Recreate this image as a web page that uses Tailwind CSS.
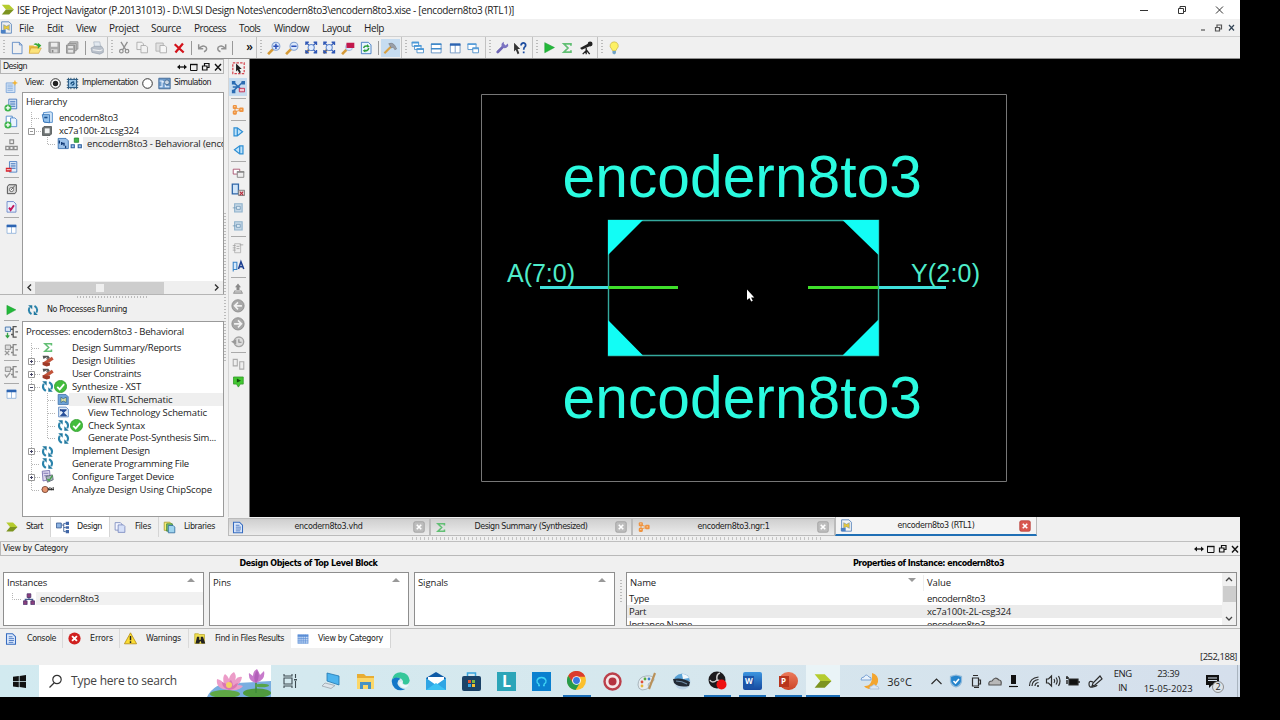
<!DOCTYPE html>
<html lang="en">
<head>
  <meta charset="UTF-8" />
  <meta name="viewport" content="width=device-width, initial-scale=1.0"/>
  <title>ISE Project Navigator</title>
  <script src="https://cdn.jsdelivr.net/npm/@tailwindcss/browser@4"></script>
</head>
<body class="bg-black w-[1280px] h-[720px] overflow-hidden">

  <!-- Icons -->
  <svg class="hidden">
    <defs>
      <linearGradient id="gEdge" x1="0" y1="0" x2="1" y2="1"><stop offset="0" stop-color="#1b9de2"/><stop offset="1" stop-color="#0c59a4"/></linearGradient>
      <linearGradient id="gDoc" x1="0" y1="0" x2="1" y2="1"><stop offset="0" stop-color="#ffffff"/><stop offset="1" stop-color="#b9d4f3"/></linearGradient>
    </defs>
    <symbol id="ise" viewBox="0 0 16 16"><path d="M1 2h9l6 6H6z" fill="#b5cc2e"/><path d="M6 8h10l-6 6H1z" fill="#7d9420"/></symbol>
    <symbol id="schDoc" viewBox="0 0 16 16"><path d="M2 1h9l3 3v11H2z" fill="url(#gDoc)" stroke="#4a7ab8"/><path d="M4.500 4.500l3.500 2 3.500-2v7L8 9.500l-3.500 2z" fill="#e9c83a" stroke="#3b70b0" stroke-width=".5"/><path d="M1 11h6v4H1z" fill="#4b80c5"/></symbol>
    <symbol id="new" viewBox="0 0 16 16"><path d="M2.500 1.500h8l3 3v10h-11z" fill="url(#gDoc)" stroke="#5b88c4"/><path d="M10.500 1.500v3h3" fill="none" stroke="#5b88c4"/></symbol>
    <symbol id="open" viewBox="0 0 16 16"><path d="M1 5h5l1 1h5v8H1z" fill="#e8b93a"/><path d="M3 8h12l-3 6H1z" fill="#fbe27a" stroke="#c8962a" stroke-width=".6"/><path d="M6 4q3-3 5 0V2l4 3-4 4V6q-2-2-5-2z" fill="#35a935"/></symbol>
    <symbol id="save" viewBox="0 0 16 16"><path d="M1.500 1.500h13v13h-12l-1-1z" fill="#a9a9a9" stroke="#8b8b8b"/><path d="M4 2h8v5H4z" fill="#ededed"/><path d="M4 10h8v4H4z" fill="#d9d9d9"/><path d="M5 11h2v3H5z" fill="#888"/></symbol>
    <symbol id="saveall" viewBox="0 0 16 16"><path d="M5 1h10v9H5z" fill="#c9c9c9" stroke="#8b8b8b"/><path d="M3 3h10v9H3z" fill="#c9c9c9" stroke="#8b8b8b"/><path d="M1 5h10v10H1z" fill="#aaa" stroke="#888"/><path d="M3 6h6v3H3zM3 11h6v3H3z" fill="#e6e6e6"/></symbol>
    <symbol id="print" viewBox="0 0 16 16"><path d="M4 1h7l1 6H5z" fill="#e3e9f0" stroke="#a9b4c2" stroke-width=".8"/><path d="M1 8l4-2h8l2 3v4l-4 2-9-2z" fill="#b9c0ca" stroke="#98a2af" stroke-width=".8"/><path d="M3 10l8 1 3-1" stroke="#fff" fill="none"/></symbol>
    <symbol id="cut" viewBox="0 0 16 16"><path d="M4 1l6 10M12 1L6 11" stroke="#8f8f8f" stroke-width="1.6" fill="none"/><circle cx="4.500" cy="12.500" r="2.200" fill="none" stroke="#8f8f8f" stroke-width="1.500"/><circle cx="11.500" cy="12.500" r="2.200" fill="none" stroke="#8f8f8f" stroke-width="1.500"/></symbol>
    <symbol id="copy" viewBox="0 0 16 16"><path d="M1.500 1.500h6l2 2v7h-8z" fill="#f2f2f2" stroke="#a5a5a5"/><path d="M6.500 5.500h6l2 2v7h-8z" fill="#f2f2f2" stroke="#a5a5a5"/></symbol>
    <symbol id="paste" viewBox="0 0 16 16"><path d="M1.500 2.500h9v10h-9z" fill="#e2e2e2" stroke="#acacac"/><path d="M6.500 5.500h6l2 2v7h-8z" fill="#f6f6f6" stroke="#a5a5a5"/></symbol>
    <symbol id="del" viewBox="0 0 16 16"><path d="M2 3l12 11M13 2L3 14" stroke="#d3131b" stroke-width="3"/></symbol>
    <symbol id="undo" viewBox="0 0 16 16"><path d="M2 3v6h6M3 8q5-5 9-1 2 4-3 6" fill="none" stroke="#919191" stroke-width="2"/></symbol>
    <symbol id="redo" viewBox="0 0 16 16"><path d="M14 3v6H8M13 8Q8 3 4 7q-2 4 3 6" fill="none" stroke="#919191" stroke-width="2"/></symbol>
    <symbol id="zin" viewBox="0 0 16 16"><path d="M1 15l6-6" stroke="#d69a37" stroke-width="3"/><circle cx="10" cy="6" r="4.500" fill="#dbe8fb" stroke="#7f9fd0" stroke-width="1.200"/><path d="M10 3v6M7 6h6" stroke="#2b50b8" stroke-width="1.700"/></symbol>
    <symbol id="zout" viewBox="0 0 16 16"><path d="M1 15l6-6" stroke="#d69a37" stroke-width="3"/><circle cx="10" cy="6" r="4.500" fill="#dbe8fb" stroke="#7f9fd0" stroke-width="1.200"/><path d="M7 6h6" stroke="#2b50b8" stroke-width="1.700"/></symbol>
    <symbol id="zfit" viewBox="0 0 16 16"><path d="M1 15l5-5" stroke="#d69a37" stroke-width="3"/><path d="M2 2l12 12M14 2L2 14M1.500 5V1.500H5M11 1.500h3.500V5M14.500 11v3.500H11M5 14.500H1.500V11" stroke="#2f57b5" stroke-width="1.700" fill="none"/><circle cx="8" cy="8" r="3.800" fill="#e1edff" stroke="#5f86cc" stroke-width="1.300"/></symbol>
    <symbol id="zsel" viewBox="0 0 16 16"><path d="M1 15l6-6" stroke="#d69a37" stroke-width="3"/><circle cx="9" cy="7" r="4" fill="#dbe8fb" stroke="#9cb4dc"/><path d="M6 2h9v6H6z" fill="#c2184c"/></symbol>
    <symbol id="refresh" viewBox="0 0 16 16"><path d="M2.500 1.500h8l3 3v10h-11z" fill="#eaf4ff" stroke="#3d77c0"/><path d="M5 8q1-3 5-2M11 8q-1 4-5 3" stroke="#2f9e3d" stroke-width="1.700" fill="none"/><path d="M9 3.500l3 3-3 1zM7 9v4l-3-2z" fill="#2f9e3d"/></symbol>
    <symbol id="hammer" viewBox="0 0 16 16"><path d="M1 14l8-8" stroke="#d9a143" stroke-width="2.500"/><path d="M6 3q4-2 7 2l2 4-2 1-2-3-2 1z" fill="#9a9fa8" stroke="#72767e" stroke-width=".6"/></symbol>
    <symbol id="cascade" viewBox="0 0 16 16"><g fill="#fff" stroke="#3f86c6"><path d="M.5 1.500h8v5h-8zM3.500 5.500h8v5h-8zM6.500 9.500h8v5h-8z"/></g><path d="M0 1h9v2H0zM3 5h9v2H3zM6 9h9v2H6z" fill="#4d9ad8"/></symbol>
    <symbol id="tileh" viewBox="0 0 16 16"><path d="M1.500 2.500h13v12h-13z" fill="#fff" stroke="#3f78b5"/><path d="M1 2h14v2H1zM1 8h14v2H1z" fill="#3f8acb"/></symbol>
    <symbol id="tilev" viewBox="0 0 16 16"><path d="M1.500 2.500h13v12h-13zM8 3v11" fill="#fff" stroke="#5584ba"/><path d="M1 2h14v3H1z" fill="#2c64b2"/></symbol>
    <symbol id="float" viewBox="0 0 16 16"><path d="M1.500 3.500h10v7h-10z" fill="#fff" stroke="#3f86c6"/><path d="M7.500 8.500h7v6h-7z" fill="#fff" stroke="#3f86c6"/><path d="M1 3h11v2H1zM7 8h8v2H7z" fill="#5a9fda"/></symbol>
    <symbol id="wrench" viewBox="0 0 16 16"><path d="M2.500 13.500L10 6" stroke="#6f67b5" stroke-width="3.400" stroke-linecap="round"/><path d="M10 1Q6 3 7.500 7q4 4 8-1l-.5-3-3 2.500-2-2z" fill="#7c74c2"/></symbol>
    <symbol id="whats" viewBox="0 0 16 16"><path d="M1 2l7 7H5l2 5-2 1-2-5-2 2z" fill="#333"/><path d="M9 5q0-3 3-3 3 1 2 4-2 1-2 4M12 12v2" fill="none" stroke="#1c4da0" stroke-width="2"/></symbol>
    <symbol id="play" viewBox="0 0 16 16"><path d="M2.500 2l12 6-12 6.500z" fill="#23b83a" stroke="#159a2b" stroke-width=".6"/></symbol>
    <symbol id="sigma" viewBox="0 0 16 16"><path d="M13 5V2.500H3.500L9 8l-5.500 5.500H13V11" fill="none" stroke="#62bf74" stroke-width="2.300"/></symbol>
    <symbol id="scope" viewBox="0 0 16 16"><path d="M1 8l9-5 2 3-9 4z" fill="#222"/><circle cx="12.500" cy="3.500" r="2.800" fill="#222"/><path d="M8 8v3l-4 4M8 10l4 5M8 10v5" stroke="#222" stroke-width="1.500" fill="none"/></symbol>
    <symbol id="bulb" viewBox="0 0 16 16"><path d="M8 1a4.500 4.500 0 0 0-3 8l1 2h4l1-2a4.500 4.500 0 0 0-3-8z" fill="#fdf164" stroke="#c9b545" stroke-width=".8"/><path d="M6 11.500h4v2.500l-2 1.500-2-1.500z" fill="#6fa3c7"/></symbol>

    <symbol id="newsrc" viewBox="0 0 16 16"><path d="M2.500 3.500h10v11h-10z" fill="#cfe0f5" stroke="#7ea6d8"/><path d="M4 6h6M4 8h6M4 10h6M4 12h6" stroke="#8ab0de"/><path d="M12.500 0l1 2.500L16 3.500l-2.500 1-1 2.500-1-2.500-2.500-1 2.500-1z" fill="#f4b535"/></symbol>
    <symbol id="addsrc" viewBox="0 0 16 16"><path d="M5.500 1.500h9v11h-9z" fill="#e4eefb" stroke="#3f74bb"/><path d="M7 4h6M7 6h6M7 8h6M7 10h6" stroke="#3f74bb"/><circle cx="4.500" cy="11.500" r="4" fill="#3cb44a"/><path d="M4.500 9v5M2 11.500h5" stroke="#fff" stroke-width="1.500"/></symbol>
    <symbol id="addcopy" viewBox="0 0 16 16"><path d="M2.500 1.500h7v10h-7z" fill="#fff" stroke="#4f88c9"/><path d="M7.500 3.500h5l2 2v8h-7z" fill="#e9f3ff" stroke="#4f88c9"/><circle cx="4.500" cy="11.500" r="4" fill="#3cb44a"/><path d="M4.500 9v5M2 11.500h5" stroke="#fff" stroke-width="1.500"/></symbol>
    <symbol id="hier" viewBox="0 0 16 16"><g fill="#ededed" stroke="#8d8d8d" stroke-width="1.500"><path d="M6 2h4.500v4.500H6zM1 10h4v4H1zM11 10h4v4h-4zM6 10h4v4H6z"/></g></symbol>
    <symbol id="rmsrc" viewBox="0 0 16 16"><path d="M5.500 1.500h9v13h-9z" fill="#e4eefb" stroke="#3f74bb"/><path d="M7 4h6M7 6h6M7 8h6M7 10h6" stroke="#3f74bb"/><path d="M1 9h7v5H1z" fill="#d8232d"/><path d="M2 11.500h5" stroke="#fff"/></symbol>
    <symbol id="props" viewBox="0 0 16 16"><path d="M4 2h11v10l-2 3H2V5z" fill="#d8d8d8" stroke="#444" stroke-width="1.300"/><circle cx="8" cy="9" r="3" fill="#fff" stroke="#444"/><path d="M7 10l6-7" stroke="#555" stroke-width="1.400"/></symbol>
    <symbol id="check" viewBox="0 0 16 16"><path d="M2.500 1.500h8l3 3v10h-11z" fill="#eaf1fc" stroke="#5c7cc4"/><path d="M5 9l2 3 4-6" fill="none" stroke="#c2185b" stroke-width="2.400"/></symbol>
    <symbol id="table" viewBox="0 0 16 16"><path d="M1.500 2.500h13v12h-13zM8 3v11" fill="#fff" stroke="#77a2d4"/><path d="M1 2h14v3.500H1z" fill="#2c64b2"/></symbol>
    <symbol id="proc" viewBox="0 0 16 16"><path d="M1.500 2.500h6v5h-6z" fill="#dce9f7" stroke="#3c6ea8"/><path d="M4 9v5M2 12l2 2.500L6 12" stroke="#35a346" stroke-width="1.500" fill="none"/><path d="M14.500 2h-4v12h4M8 5h2.500M8 11h2.500M13 8h3" stroke="#555" stroke-width="1.500" fill="none"/></symbol>
    <symbol id="procx" viewBox="0 0 16 16"><path d="M1.500 2.500h6v5h-6z" fill="#ddd" stroke="#888"/><path d="M1 9l5 5M6 9l-5 5" stroke="#999" stroke-width="1.500"/><path d="M14.500 2h-4v12h4M8 5h2.500M8 11h2.500M13 8h3" stroke="#888" stroke-width="1.500" fill="none"/></symbol>
    <symbol id="procc" viewBox="0 0 16 16"><path d="M1.500 2.500h6v5h-6z" fill="#ddd" stroke="#888"/><path d="M1 11l2 3 4-5" stroke="#999" stroke-width="1.500" fill="none"/><path d="M14.500 2h-4v12h4M8 5h2.500M8 11h2.500M13 8h3" stroke="#888" stroke-width="1.500" fill="none"/></symbol>

    <symbol id="select" viewBox="0 0 16 16"><path d="M1 1.500h14v13H1z" fill="none" stroke="#d4434d" stroke-width="1.500" stroke-dasharray="3 1.500"/><path d="M5 2l7 7H9l2 4-2 1-2-4-2 2z" fill="#222"/></symbol>
    <symbol id="expand" viewBox="0 0 16 16"><path d="M2 2l12 11M14 2L2 13M2 8h8" stroke="#2b6cb3" stroke-width="1.600"/><path d="M1 1h4v4H1zM12 1h4v4h-4zM1 11h4v4H1z" fill="#2b6cb3"/><path d="M9.500 9.500h6v4h-6z" fill="#f5c6d0" stroke="#c0284c"/></symbol>
    <symbol id="nodes" viewBox="0 0 16 16"><path d="M4 5v6M4 5l8 3-8 3" stroke="#eda35c" fill="none" stroke-width="1.500"/><rect x="1" y="1.500" width="5.500" height="5.500" rx="1.500" fill="#ee9340"/><rect x="1" y="9" width="5.500" height="5.500" rx="1.500" fill="#ee9340"/><rect x="9.500" y="5" width="6" height="6" rx="1.500" fill="#ee9340"/><path d="M3 3h1.500v1.500H3zM3 10.500h1.500V12H3zM11.500 7H13v1.500h-1.500z" fill="#fbd6a8"/></symbol>
    <symbol id="bufr" viewBox="0 0 16 16"><path d="M2.500 3v10h4l6.500-5-6.500-5zM6.500 3v10" fill="#bfe3fa" stroke="#2f8fd4" stroke-width="1.500"/></symbol>
    <symbol id="bufl" viewBox="0 0 16 16"><path d="M13.500 3v10h-4L3 8l6.500-5zM9.500 3v10" fill="#bfe3fa" stroke="#2f8fd4" stroke-width="1.500"/></symbol>
    <symbol id="wins" viewBox="0 0 16 16"><path d="M1.500 3.500h8v6h-8z" fill="#fff" stroke="#a04060"/><path d="M6.500 6.500h8v7h-8z" fill="#eee" stroke="#777"/><path d="M6 6h9v2H6z" fill="#888"/></symbol>
    <symbol id="winx" viewBox="0 0 16 16"><path d="M1.500 1.500h7v11h-7z" fill="#cfe4f8" stroke="#2f66a8" stroke-width="1.500"/><path d="M8.500 8.500h7v6h-7z" fill="#ddd" stroke="#777"/><path d="M10 10l4 4M14 10l-4 4" stroke="#b7283a" stroke-width="1.300"/></symbol>
    <symbol id="chipb" viewBox="0 0 16 16"><path d="M3.500 2.500h10v11h-10z" fill="#c5d7e6" stroke="#8fb2cc" stroke-width="1.500"/><path d="M6 6h5v4H6zM1 8h4" fill="#dceaf5" stroke="#6b93b3"/></symbol>
    <symbol id="notes" viewBox="0 0 16 16"><path d="M3.500 2.500h8v12h-8z" fill="#eee" stroke="#aaa"/><path d="M1 5h4M1 8h4M1 11h4M6 6h4M6 9h4M10 4h5" stroke="#999"/></symbol>
    <symbol id="rename" viewBox="0 0 16 16"><path d="M1.500 3v12M1.500 3.500H6v9H2" fill="#d5e9fa" stroke="#3883c8" stroke-width="1.300"/><path d="M8 12l3-9 3.500 9M9 9h4.500" stroke="#1c3f90" stroke-width="1.900" fill="none"/></symbol>
    <symbol id="up" viewBox="0 0 16 16"><path d="M8 1l4 5h-2v4H6V6H4z" fill="#8a8a8a"/><path d="M4 10l-2 4h12l-2-4" fill="#bbb" stroke="#8a8a8a"/></symbol>
    <symbol id="back" viewBox="0 0 16 16"><circle cx="8" cy="8" r="7" fill="#a8a8a8" stroke="#8c8c8c"/><path d="M12.500 8H4.500M8 4L4 8l4 4" stroke="#f2f2f2" stroke-width="1.800" fill="none"/></symbol>
    <symbol id="fwd" viewBox="0 0 16 16"><circle cx="8" cy="8" r="7" fill="#a8a8a8" stroke="#8c8c8c"/><path d="M3.500 8h8M8 4l4 4-4 4" stroke="#f2f2f2" stroke-width="1.800" fill="none"/></symbol>
    <symbol id="clock" viewBox="0 0 16 16"><circle cx="9" cy="8" r="5.500" fill="#ddd" stroke="#a3a3a3" stroke-width="1.600"/><path d="M0 8l6-3v6z" fill="#999"/><path d="M9 5v3.500h3" stroke="#888" stroke-width="1.300" fill="none"/></symbol>
    <symbol id="pair" viewBox="0 0 16 16"><path d="M1.500 2.500h5v8h-5zM9.500 5.500h5v9h-5z" fill="#eee" stroke="#aaa" stroke-width="1.300"/></symbol>
    <symbol id="go" viewBox="0 0 16 16"><path d="M2 1.500h13v9.500h-4L8.500 15 6 11H2z" fill="#43c832" stroke="#2f9624"/><path d="M6.500 3.500L12 6.500 6.500 9z" fill="#134f0f"/></symbol>

    <symbol id="impl" viewBox="0 0 16 16"><path d="M1 3h14M1 6h14M1 10h14M1 13h14M3 1v14M6 1v14M10 1v14M13 1v14" stroke="#2e5673" stroke-width="1.200"/><path d="M3 3h10v10H3z" fill="#9cc7e8" stroke="#1e4f7b"/><path d="M6 9q0-3 4-3M10 7q0 3-3 3" fill="none" stroke="#124a7c" stroke-width="1.400"/></symbol>
    <symbol id="sim" viewBox="0 0 16 16"><path d="M1 1.500h14v13H1z" fill="#6f9ccc" stroke="#385f8d"/><path d="M2 12h3V6h4v6h5M2 5h4" stroke="#e8f2ff" fill="none" stroke-width="1.300"/><circle cx="11" cy="6.500" r="3" fill="#cbd7e4" stroke="#355f8b"/></symbol>
    <symbol id="proj" viewBox="0 0 16 16"><path d="M3 2l9-1 2 1v12H5l-2-1z" fill="#d4e7f9" stroke="#3c7fc4"/><path d="M1.500 4.500h9v10l-7-1z" fill="#93c1ec" stroke="#2d6db2"/><path d="M4 8h4" stroke="#194f8d" stroke-width="2"/></symbol>
    <symbol id="chip" viewBox="0 0 16 16"><path d="M2 4l2-2h10v10l-2 2H2z" fill="#6d7272" stroke="#4a4f4f"/><path d="M5 4.500h6.500V11H5z" fill="#f2f4f4"/></symbol>
    <symbol id="vhd" viewBox="0 0 16 16"><path d="M1.500 1.500h10l3 3v10h-13z" fill="#9cc2ea" stroke="#2c66aa"/><path d="M3 4v4M6 6v4M9 7v4M6 8h3M11 11v3" stroke="#153d78" stroke-width="1.700"/></symbol>
    <symbol id="mods" viewBox="0 0 16 16"><path d="M5.500 1h5.500v5.500H5.500z" fill="#43b64b" stroke="#23852c"/><path d="M1.500 9.500h4v4h-4zM10.500 9.500h4v4h-4z" fill="#a6c9ee" stroke="#2c5f9f" stroke-width="1.400"/></symbol>
    <symbol id="tools" viewBox="0 0 16 16"><path d="M2 2h7l2 3-2 1-2-2-4 2z" fill="#555"/><path d="M7 5l4 5" stroke="#777" stroke-width="2"/><path d="M3 12.500L14.500 5" stroke="#c2533a" stroke-width="4"/><path d="M2 10l9 1v3l-4 1.500-5-2z" fill="#9e3a28"/></symbol>
    <symbol id="cyc" viewBox="0 0 16 16"><path d="M6 13.500Q.5 10 3.500 4.500M10 2.500q5.500 3.500 2.500 9" fill="none" stroke="#2a83ab" stroke-width="2.500"/><path d="M1.500 1.500H7V7zM14.500 14.500H9V9z" fill="#23799f"/></symbol>
    <symbol id="ok" viewBox="0 0 16 16"><circle cx="8" cy="8" r="7.500" fill="#43bd3c" stroke="#2f9e2c"/><path d="M4 8.500l3 3 5.500-6.500" fill="none" stroke="#fff" stroke-width="2.200"/></symbol>
    <symbol id="rtl" viewBox="0 0 16 16"><path d="M1.500 1.500h10l3 3v10h-13z" fill="#6ea3d8" stroke="#3b6ea8"/><path d="M5 5l3 2 4-2v7l-4-2-3 2z" fill="#d9dfa0" stroke="#3c6a87"/></symbol>
    <symbol id="tech" viewBox="0 0 16 16"><path d="M1.500 1.500h10l3 3v10h-13z" fill="#e1ecf9" stroke="#4775b7"/><path d="M4 5h8L8 9zM4 13h8L8 9zM4 4v3" fill="#2351a3" stroke="#173a80"/></symbol>
    <symbol id="config" viewBox="0 0 16 16"><path d="M1.500 1.500l9-1 1 11-9 2z" fill="#ddd6ee" stroke="#6d65a8"/><path d="M3 4h6M4 7h5" stroke="#6d65a8"/><path d="M6 8l8-2 1 6-7 3z" fill="#a9b4c0" stroke="#58616c"/><path d="M8 11l2 2 4-6" stroke="#42a344" fill="none" stroke-width="1.600"/></symbol>
    <symbol id="cscope" viewBox="0 0 16 16"><path d="M1 8h15" stroke="#444" stroke-width="1.500"/><circle cx="5" cy="8" r="3.800" fill="#e5956f" stroke="#6d3a2a"/><path d="M9 9V6M11 9V5M13 9V6M15 9V5" stroke="#333" stroke-width="1.200"/></symbol>
    <symbol id="flow" viewBox="0 0 16 16"><path d="M.5 2.500h6v6h-6z" fill="#8db3e2" stroke="#32568f"/><path d="M7 5h3M9.500 3v10M9.500 8H12M9.500 13H12M9.500 3H12" stroke="#32568f" fill="none"/><path d="M12 1h4v4h-4zM12 6.500h4v3h-4zM12 11h4v4h-4z" fill="#4066a7"/></symbol>
    <symbol id="files" viewBox="0 0 16 16"><path d="M1.500 1.500h7l2 2v8h-9z" fill="#f4f6ff" stroke="#6d7fb8"/><path d="M5.500 4.500h7l2 2v8h-9z" fill="#d6e0f8" stroke="#6d7fb8"/></symbol>
    <symbol id="libs" viewBox="0 0 16 16"><path d="M1.500 1.500h7l2 2v8h-9z" fill="#f8ef78" stroke="#a59c2a"/><path d="M4.500 3.500h7v9h-7z" fill="#7cc676" stroke="#3a7d36"/><path d="M6.500 5.500h6l2 2v7h-8z" fill="#9fd4ee" stroke="#2f6a9c"/></symbol>
    <symbol id="doc" viewBox="0 0 16 16"><path d="M2 1h8l4 4v10H2z" fill="#dbe8fb" stroke="#376cc0" stroke-width="1.400"/><path d="M5 5h5M5 7.500h7M5 10h7M5 12.500h6" stroke="#2a5eb4"/></symbol>
    <symbol id="err" viewBox="0 0 16 16"><circle cx="8" cy="8" r="7.500" fill="#d0201f"/><path d="M5 5l6 6M11 5l-6 6" stroke="#fff" stroke-width="2.300"/></symbol>
    <symbol id="warn" viewBox="0 0 16 16"><path d="M8 1l7.500 13.500H.5z" fill="#fbdc33" stroke="#b58e12"/><path d="M8 5v5M8 11.500v2" stroke="#222" stroke-width="1.800"/></symbol>
    <symbol id="find" viewBox="0 0 16 16"><path d="M1 1h5l1 1h7v12H1z" fill="#f0df4e" stroke="#b8a52c"/><path d="M4 5h3v4h2V5h3l3 9h-5l-1-3H8l-1 3H2z" fill="#222"/></symbol>
    <symbol id="grid" viewBox="0 0 16 16"><path d="M1 2h14v12H1z" fill="#d8e7fa"/><path d="M1 2h14v3H1z" fill="#5c8fd6"/><path d="M1.500 2v12M4 2v12M6.500 2v12M9 2v12M11.500 2v12M14.500 2v12M1 7.500h14M1 10.500h14M1 13.500h14" stroke="#5c8fd6"/></symbol>
    <symbol id="inst" viewBox="0 0 16 16"><path d="M8 4v5M3 12V8.500h10V12" stroke="#445a8c" stroke-width="1.500" fill="none"/><path d="M5.500 1h5v5h-5zM.5 10.500h5v5h-5zM10.500 10.500h5v5h-5z" fill="#8b3f7c" stroke="#49306b"/></symbol>
    <symbol id="xg" viewBox="0 0 16 16"><rect x="1" y="1" width="14" height="14" rx="2" fill="#bdbdbd" stroke="#999"/><path d="M5 5l6 6M11 5l-6 6" stroke="#fff" stroke-width="2.200"/></symbol>
    <symbol id="xr" viewBox="0 0 16 16"><rect x="1" y="1" width="14" height="14" rx="2" fill="#d9584f" stroke="#b53c35"/><path d="M5 5l6 6M11 5l-6 6" stroke="#fff" stroke-width="2.200"/></symbol>
    <symbol id="dock" viewBox="0 0 48 12"><path d="M4 6h6" stroke="#111" stroke-width="1.300"/><path d="M5 3.500L2 6l3 2.500zM9 3.500L12 6 9 8.500z" fill="#111"/><path d="M15.500 3.500h6.500v6h-6.500z" fill="none" stroke="#111"/><path d="M15 2.800h7.500v1.400H15z" fill="#111"/><path d="M29.500 4.500V2.500h4.500v4h-1.500M27.500 5h4.500v4h-4.500z" fill="none" stroke="#111" stroke-width="1.200"/><path d="M40 3l6 6.500M46 3l-6 6.500" stroke="#111" stroke-width="1.400"/></symbol>
  </svg>

  <div class="w-[1240px] h-[697px] bg-[#f0f0f0] flex flex-col overflow-hidden font-['Open_Sans',sans-serif] text-[9.5px] leading-none text-[#222] whitespace-nowrap">

    <!-- Title bar -->
    <div class="h-[19px] shrink-0 bg-white flex items-center text-[10px]">
      <svg class="w-[13px] h-[13px] ml-[1px] mr-[3px]"><use href="#ise"/></svg>
      <span data-w="497">ISE Project Navigator (P.20131013) - D:\VLSI Design Notes\encodern8to3\encodern8to3.xise - [encodern8to3 (RTL1)]</span>
      <svg class="ml-auto mr-[15px] w-[88px] h-[12px]" fill="none" stroke="#333" stroke-width="1"><path d="M3 6.500h8"/><path d="M41.500 4.500h5v5h-5zM43 4V2.500h5.500v5H47"/><path d="M79 2.500l7 7M86 2.500l-7 7"/></svg>
    </div>

    <!-- Menu -->
    <div class="h-[18px] shrink-0 flex items-center border-b border-[#d0d0d0] text-[10px]">
      <svg class="w-[13px] h-[13px] mr-[6px]"><use href="#schDoc"/></svg>
      <div class="w-[28px]"><span data-w="15">File</span></div>
      <div class="w-[29px]"><span data-w="16">Edit</span></div>
      <div class="w-[33px]"><span data-w="20">View</span></div>
      <div class="w-[42px]"><span data-w="30">Project</span></div>
      <div class="w-[43px]"><span data-w="30">Source</span></div>
      <div class="w-[45px]"><span data-w="32">Process</span></div>
      <div class="w-[35px]"><span data-w="21">Tools</span></div>
      <div class="w-[48px]"><span data-w="35">Window</span></div>
      <div class="w-[42px]"><span data-w="29">Layout</span></div>
      <div><span data-w="20">Help</span></div>
      <svg class="ml-auto mr-[2px] w-[38px] h-[12px]" fill="none" stroke="#555" stroke-width="1.200"><path d="M1 8h4"/><path d="M15.500 5.500h4v3.500h-4zM17 5V3h4.500v4H20"/><path d="M29 3l5 5.500M34 3l-5 5.500" stroke="#345"/></svg>
    </div>

    <!-- Toolbar -->
    <div class="h-[22px] shrink-0 flex items-stretch border-b border-[#8f8f8f] text-[#111]">
      <div class="flex items-center w-[108px] pl-[3px] border-r border-[#c2c2c2]">
        <div class="w-[2px] h-[15px] mr-[3px] bg-[repeating-linear-gradient(180deg,#bbb_0_1px,transparent_1px_3px)]"></div>
        <svg class="w-[18.4px] h-[14px]"><use href="#new"/></svg>
        <svg class="w-[18.4px] h-[14px]"><use href="#open"/></svg>
        <svg class="w-[18.4px] h-[13px]"><use href="#save"/></svg>
        <svg class="w-[18.4px] h-[13px]"><use href="#saveall"/></svg>
        <div class="w-px h-[14px] bg-[#999] ml-[3px] mr-[2px]"></div>
        <svg class="w-[18.4px] h-[14px]"><use href="#print"/></svg>
      </div>
      <div class="flex items-center w-[149px] pl-[3px] border-r border-[#c2c2c2]">
        <div class="w-[2px] h-[15px] mr-[2px] bg-[repeating-linear-gradient(180deg,#bbb_0_1px,transparent_1px_3px)]"></div>
        <svg class="w-[18.4px] h-[13px]"><use href="#cut"/></svg>
        <svg class="w-[18.4px] h-[13px]"><use href="#copy"/></svg>
        <svg class="w-[18.4px] h-[13px]"><use href="#paste"/></svg>
        <svg class="w-[18.4px] h-[12px]"><use href="#del"/></svg>
        <div class="w-px h-[14px] bg-[#999] ml-[2px] mr-[2px]"></div>
        <svg class="w-[18.4px] h-[12px]"><use href="#undo"/></svg>
        <svg class="w-[18.4px] h-[12px]"><use href="#redo"/></svg>
        <div class="w-px h-[14px] bg-[#999] ml-[2px]"></div>
        <span class="ml-[13px] mb-[2px] text-[12px] font-semibold">»</span>
      </div>
      <div class="flex items-center w-[145px] pl-[3px] border-r border-[#c2c2c2]">
        <div class="w-[2px] h-[15px] mr-[3px] bg-[repeating-linear-gradient(180deg,#bbb_0_1px,transparent_1px_3px)]"></div>
        <svg class="w-[18.4px] h-[14px]"><use href="#zin"/></svg>
        <svg class="w-[18.4px] h-[14px]"><use href="#zout"/></svg>
        <svg class="w-[18.4px] h-[13px]"><use href="#zfit"/></svg>
        <svg class="w-[18.4px] h-[13px]"><use href="#zfit"/></svg>
        <svg class="w-[18.4px] h-[14px]"><use href="#zsel"/></svg>
        <svg class="w-[18.4px] h-[14px]"><use href="#refresh"/></svg>
        <div class="w-px h-[14px] bg-[#999] ml-[3px] mr-[2px]"></div>
        <div class="w-[19px] h-[18px] bg-[#c6dcf0] flex items-center justify-center"><svg class="w-[15px] h-[14px]"><use href="#hammer"/></svg></div>
      </div>
      <div class="flex items-center w-[84px] pl-[3px] border-r border-[#c2c2c2]">
        <div class="w-[2px] h-[15px] mr-[2px] bg-[repeating-linear-gradient(180deg,#bbb_0_1px,transparent_1px_3px)]"></div>
        <svg class="w-[18.4px] h-[13px]"><use href="#cascade"/></svg>
        <svg class="w-[18.4px] h-[12px]"><use href="#tileh"/></svg>
        <svg class="w-[18.4px] h-[12px]"><use href="#tilev"/></svg>
        <svg class="w-[18.4px] h-[13px]"><use href="#float"/></svg>
      </div>
      <div class="flex items-center w-[47px] pl-[3px] border-r border-[#c2c2c2]">
        <div class="w-[2px] h-[15px] mr-[2px] bg-[repeating-linear-gradient(180deg,#bbb_0_1px,transparent_1px_3px)]"></div>
        <svg class="w-[18.4px] h-[13px]"><use href="#wrench"/></svg>
        <svg class="w-[18.4px] h-[14px]"><use href="#whats"/></svg>
      </div>
      <div class="flex items-center w-[65px] pl-[3px] border-r border-[#c2c2c2]">
        <div class="w-[2px] h-[15px] mr-[2px] bg-[repeating-linear-gradient(180deg,#bbb_0_1px,transparent_1px_3px)]"></div>
        <svg class="w-[18.4px] h-[13px]"><use href="#play"/></svg>
        <svg class="w-[18.4px] h-[12px]"><use href="#sigma"/></svg>
        <svg class="w-[18.4px] h-[14px]"><use href="#scope"/></svg>
      </div>
      <div class="flex items-center pl-[3px]">
        <div class="w-[2px] h-[15px] mr-[2px] bg-[repeating-linear-gradient(180deg,#bbb_0_1px,transparent_1px_3px)]"></div>
        <svg class="w-[18.4px] h-[14px]"><use href="#bulb"/></svg>
      </div>
    </div>

    <!-- Work area -->
    <div class="h-[458px] shrink-0 flex">
      <div class="w-[224px] shrink-0 flex flex-col">
        <div class="h-[15px] shrink-0 flex items-center border border-[#b5b5b5] pl-[2px] font-['DejaVu_Sans',sans-serif] text-[8px]">
          <span data-w="24">Design</span>
          <svg class="ml-auto w-[48px] h-[12px]"><use href="#dock"/></svg>
        </div>
        <div class="h-[221px] shrink-0 flex border-b border-[#b5b5b5]">
          <div class="w-[22px] shrink-0 flex flex-col items-center pt-[4px]">
            <svg class="w-[14px] h-[17.7px]"><use href="#newsrc"/></svg>
            <svg class="w-[14px] h-[17.7px]"><use href="#addsrc"/></svg>
            <svg class="w-[14px] h-[17.7px]"><use href="#addcopy"/></svg>
            <div class="w-[15px] h-[4.5px] flex items-center"><div class="w-full h-px bg-[#aaa]"></div></div>
            <svg class="w-[13px] h-[17.7px]"><use href="#hier"/></svg>
            <div class="w-[15px] h-[4.5px] flex items-center"><div class="w-full h-px bg-[#aaa]"></div></div>
            <svg class="w-[13px] h-[17.7px]"><use href="#rmsrc"/></svg>
            <div class="w-[15px] h-[4.5px] flex items-center"><div class="w-full h-px bg-[#aaa]"></div></div>
            <svg class="w-[11px] h-[17.7px]"><use href="#props"/></svg>
            <svg class="w-[13px] h-[17.7px]"><use href="#check"/></svg>
            <div class="w-[15px] h-[4.5px] flex items-center"><div class="w-full h-px bg-[#aaa]"></div></div>
            <svg class="w-[11px] h-[17.7px]"><use href="#table"/></svg>
          </div>
          <div class="w-[202px] flex flex-col">
            <div class="h-[18px] flex items-center pl-[3px] font-['DejaVu_Sans',sans-serif] text-[8px]">
              <div class="w-[25px]"><span data-w="19">View:</span></div>
              <svg class="w-[11px] h-[11px] mr-[5px]" viewBox="0 0 11 11"><circle cx="5.500" cy="5.500" r="4.800" fill="#fff" stroke="#333"/><circle cx="5.500" cy="5.500" r="2.700" fill="#222"/></svg>
              <svg class="w-[13px] h-[13px] mr-[3px]"><use href="#impl"/></svg>
              <div class="w-[60px]"><span data-w="56">Implementation</span></div>
              <svg class="w-[11px] h-[11px] mr-[5px]" viewBox="0 0 11 11"><circle cx="5.500" cy="5.500" r="4.800" fill="#fff" stroke="#333"/></svg>
              <svg class="w-[13px] h-[13px] mr-[3px]"><use href="#sim"/></svg>
              <span data-w="37">Simulation</span>
            </div>
            <div class="h-[202px] relative flex flex-col bg-white border border-[#9a9a9a] border-b-0 overflow-hidden">
              <svg class="absolute left-0 top-0 w-[50px] h-[70px]" fill="none" stroke="#b5b5b5" stroke-dasharray="1 1"><path d="M8.500 19v20M9 25.500h8M13 38.500h5M24.500 44v7M25 51.500h8"/><path d="M5.500 35.500h6v6h-6zM7 38.500h3" fill="#fff" stroke="#999" stroke-dasharray="none"/></svg>
              <div class="h-[18px] flex items-center pl-[3px]"><span data-w="41">Hierarchy</span></div>
              <div class="h-[13px] flex items-center pl-[18px]"><svg class="w-[13px] h-[13px] mr-[5px]"><use href="#proj"/></svg><span data-w="59">encodern8to3</span></div>
              <div class="h-[13px] flex items-center pl-[18px]"><svg class="w-[12px] h-[12px] mr-[6px]"><use href="#chip"/></svg><span data-w="80">xc7a100t-2Lcsg324</span></div>
              <div class="h-[13px] flex items-center pl-[34px]"><svg class="w-[13px] h-[13px]"><use href="#vhd"/></svg><svg class="w-[13px] h-[13px] mr-[1px]"><use href="#mods"/></svg><div class="bg-[#efefef] h-[13px] w-[140px] flex items-center pl-[4px]"><span data-w="200">encodern8to3 - Behavioral (encodern8to3.vhd)</span></div></div>
              <div class="mt-auto h-[13px] flex items-center bg-[#efefef] px-[3px] justify-between">
                <svg class="w-[7px] h-[9px]" fill="none" stroke="#333" stroke-width="1.400"><path d="M5 1.500L2 4.500l3 3"/></svg>
                <div class="w-[129px] h-[12px] bg-[#cdcdcd] mr-[47px] flex items-center justify-center"><div class="w-[8px] h-[8px] bg-[#efefef]"></div></div>
                <svg class="w-[7px] h-[9px]" fill="none" stroke="#333" stroke-width="1.400"><path d="M2 1.500l3 3-3 3"/></svg>
              </div>
            </div>
          </div>
        </div>
        <div class="h-[4px] shrink-0 flex justify-center items-center"><div class="w-[70px] h-[2px] bg-[repeating-linear-gradient(90deg,#bbb_0_1px,transparent_1px_3px)]"></div></div>
        <div class="h-[218px] flex">
          <div class="w-[22px] shrink-0 flex flex-col items-center pt-[2px]">
            <svg class="w-[12px] h-[17.7px]"><use href="#play"/></svg>
            <div class="w-[15px] h-[4.5px] flex items-center"><div class="w-full h-px bg-[#aaa]"></div></div>
            <svg class="w-[14px] h-[17.7px]"><use href="#proc"/></svg>
            <svg class="w-[14px] h-[17.7px]"><use href="#procx"/></svg>
            <div class="w-[15px] h-[4.5px] flex items-center"><div class="w-full h-px bg-[#aaa]"></div></div>
            <svg class="w-[14px] h-[17.7px]"><use href="#procc"/></svg>
            <div class="w-[15px] h-[4.5px] flex items-center"><div class="w-full h-px bg-[#aaa]"></div></div>
            <svg class="w-[11px] h-[17.7px]"><use href="#table"/></svg>
          </div>
          <div class="w-[202px] flex flex-col">
            <div class="h-[22px] flex items-center pl-[5px] font-['DejaVu_Sans',sans-serif] text-[8px]">
              <svg class="w-[12px] h-[12px] mr-[8px]"><use href="#cyc"/></svg><span data-w="80">No Processes Running</span>
            </div>
            <div class="h-[196px] relative bg-white border border-[#9a9a9a] overflow-hidden">
              <svg class="absolute left-0 top-0 w-[50px] h-[190px]" fill="none" stroke="#b5b5b5">
                <path d="M8.500 21v147M9 26.500h7M12 39.500h5M12 52.500h5M12 65.500h5M24.500 71v46M25 78.500h7M25 91.500h7M25 104.500h7M25 116.500h7M12 129.500h5M9 142.500h7M12 155.500h5M9 168.500h7" stroke-dasharray="1 1"/>
                <path d="M5.500 36.500h6v6h-6zM5.500 49.500h6v6h-6zM5.500 62.500h6v6h-6zM5.500 126.500h6v6h-6zM5.500 152.500h6v6h-6z" fill="#fff" stroke="#999"/>
                <path d="M7 39.500h3M8.500 38v3M7 52.500h3M8.500 51v3M7 65.500h3M7 129.500h3M8.500 128v3M7 155.500h3M8.500 154v3" stroke="#446"/>
              </svg>
              <div class="h-[19.5px] flex items-center pl-[3px]"><span data-w="158">Processes: encodern8to3 - Behavioral</span></div>
              <div class="h-[12.9px] flex items-center pl-[19px]"><svg class="w-[12px] h-[11px] mr-[18px]"><use href="#sigma"/></svg><span data-w="109">Design Summary/Reports</span></div>
              <div class="h-[12.9px] flex items-center pl-[18px]"><svg class="w-[13px] h-[13px] mr-[18px]"><use href="#tools"/></svg><span data-w="63">Design Utilities</span></div>
              <div class="h-[12.9px] flex items-center pl-[18px]"><svg class="w-[13px] h-[13px] mr-[18px]"><use href="#tools"/></svg><span data-w="69">User Constraints</span></div>
              <div class="h-[12.9px] flex items-center pl-[18px]"><svg class="w-[13px] h-[13px]"><use href="#cyc"/></svg><svg class="w-[13px] h-[13px] mr-[5px]"><use href="#ok"/></svg><span data-w="69">Synthesize - XST</span></div>
              <div class="h-[12.9px] flex items-center pl-[34px]"><svg class="w-[13px] h-[13px]"><use href="#rtl"/></svg><div class="w-[160px] h-[13px] bg-[#efefef] flex items-center pl-[18px]"><span data-w="85">View RTL Schematic</span></div></div>
              <div class="h-[12.9px] flex items-center pl-[34px]"><svg class="w-[13px] h-[12px] mr-[18px]"><use href="#tech"/></svg><span data-w="119">View Technology Schematic</span></div>
              <div class="h-[12.9px] flex items-center pl-[34px]"><svg class="w-[13px] h-[13px]"><use href="#cyc"/></svg><svg class="w-[13px] h-[13px] mr-[5px]"><use href="#ok"/></svg><span data-w="57">Check Syntax</span></div>
              <div class="h-[12.9px] flex items-center pl-[34px]"><svg class="w-[13px] h-[13px] mr-[18px]"><use href="#cyc"/></svg><span data-w="128">Generate Post-Synthesis Sim...</span></div>
              <div class="h-[12.9px] flex items-center pl-[18px]"><svg class="w-[13px] h-[13px] mr-[18px]"><use href="#cyc"/></svg><span data-w="78">Implement Design</span></div>
              <div class="h-[12.9px] flex items-center pl-[18px]"><svg class="w-[13px] h-[13px] mr-[18px]"><use href="#cyc"/></svg><span data-w="117">Generate Programming File</span></div>
              <div class="h-[12.9px] flex items-center pl-[18px]"><svg class="w-[13px] h-[13px] mr-[18px]"><use href="#config"/></svg><span data-w="102">Configure Target Device</span></div>
              <div class="h-[12.9px] flex items-center pl-[18px]"><svg class="w-[13px] h-[13px] mr-[18px]"><use href="#cscope"/></svg><span data-w="140">Analyze Design Using ChipScope</span></div>
            </div>
          </div>
        </div>
      </div>

      <!-- Schematic tool strip -->
      <div class="w-[4px] shrink-0 flex items-center"><div class="w-[2px] h-[150px] bg-[repeating-linear-gradient(180deg,#bbb_0_1px,transparent_1px_3px)]"></div></div>
      <div class="w-[21px] shrink-0 flex flex-col items-center pr-[2px] border-l border-[#d5d5d5]">
        <svg class="w-[13px] h-[18.5px]"><use href="#select"/></svg>
        <div class="w-[18px] h-[18px] bg-[#c6dcf0] flex items-center justify-center"><svg class="w-[14px] h-[14px]"><use href="#expand"/></svg></div>
        <div class="w-[15px] h-[5px] flex items-center"><div class="w-full h-px bg-[#aaa]"></div></div>
        <svg class="w-[12px] h-[17.7px]"><use href="#nodes"/></svg>
        <div class="w-[15px] h-[5px] flex items-center"><div class="w-full h-px bg-[#aaa]"></div></div>
        <svg class="w-[13px] h-[17.7px]"><use href="#bufr"/></svg>
        <svg class="w-[13px] h-[17.7px]"><use href="#bufl"/></svg>
        <div class="w-[15px] h-[5px] flex items-center"><div class="w-full h-px bg-[#aaa]"></div></div>
        <svg class="w-[13px] h-[17.7px]"><use href="#wins"/></svg>
        <svg class="w-[14px] h-[17.7px]"><use href="#winx"/></svg>
        <svg class="w-[12px] h-[17.7px]"><use href="#chipb"/></svg>
        <svg class="w-[12px] h-[17.7px]"><use href="#chipb"/></svg>
        <div class="w-[15px] h-[5px] flex items-center"><div class="w-full h-px bg-[#aaa]"></div></div>
        <svg class="w-[12px] h-[17.7px]"><use href="#notes"/></svg>
        <svg class="w-[13px] h-[17.7px]"><use href="#rename"/></svg>
        <div class="w-[15px] h-[5px] flex items-center"><div class="w-full h-px bg-[#aaa]"></div></div>
        <svg class="w-[12px] h-[17.7px]"><use href="#up"/></svg>
        <svg class="w-[14px] h-[17.7px]"><use href="#back"/></svg>
        <svg class="w-[14px] h-[17.7px]"><use href="#fwd"/></svg>
        <svg class="w-[14px] h-[17.7px]"><use href="#clock"/></svg>
        <div class="w-[15px] h-[5px] flex items-center"><div class="w-full h-px bg-[#aaa]"></div></div>
        <svg class="w-[13px] h-[17.7px]"><use href="#pair"/></svg>
        <svg class="w-[12px] h-[17.7px]"><use href="#go"/></svg>
      </div>

      <!-- RTL schematic, drawn in window coordinates -->
      <svg class="w-[991px] h-[458px] bg-black border-l border-[#777] font-['Liberation_Sans',Arial,sans-serif]" viewBox="250 59 990 458">
        <path d="M481.500 94.500h525v387h-525z" fill="none" stroke="#777"/>
        <path d="M608.500 220.500h270v135h-270z" fill="none" stroke="#35a89d" stroke-width="1.400"/>
        <path d="M608 220h35l-35 35zM878.500 220h-36l36 35zM608 355.500v-35.500l35 35.500zM878.500 355.500v-36l-36 36z" fill="#12fdf5"/>
        <path d="M540 287.500h68M879 287.500h67" stroke="#3fe0dc" stroke-width="3"/>
        <path d="M608.500 287.500h69.500M808 287.500h70.500" stroke="#3fdf2b" stroke-width="3.200"/>
        <g fill="#2bfbe0">
          <text x="562.500" y="197" font-size="58.700" textLength="359.500">encodern8to3</text>
          <text x="562.500" y="417.500" font-size="58.700" textLength="359.500">encodern8to3</text>
        </g>
        <g fill="#4fecca" font-size="25">
          <text x="507" y="282" textLength="68">A(7:0)</text>
          <text x="911" y="282" textLength="69">Y(2:0)</text>
        </g>
        <path d="M747 289.500v10.500l2.400-2 1.800 3.500 1.600-.8-1.700-3.300h3.200z" fill="#fff"/>
      </svg>
    </div>

    <!-- Panel tabs and editor tabs -->
    <div class="h-[20px] shrink-0 flex font-['DejaVu_Sans',sans-serif] text-[8px]">
      <div class="w-[228px] shrink-0 flex">
        <div class="w-[50px] flex items-center pl-[5px]"><svg class="w-[13px] h-[12px] mr-[8px]"><use href="#ise"/></svg><span data-w="17">Start</span></div>
        <div class="w-[60px] flex items-center pl-[5px] bg-white border-x border-[#d5d5d5]"><svg class="w-[13px] h-[13px] mr-[8px]"><use href="#flow"/></svg><span data-w="25">Design</span></div>
        <div class="w-[49px] flex items-center pl-[4px] border-r border-[#d5d5d5]"><svg class="w-[12px] h-[13px] mr-[9px]"><use href="#files"/></svg><span data-w="16">Files</span></div>
        <div class="w-[64px] flex items-center pl-[4px]"><svg class="w-[13px] h-[13px] mr-[8px]"><use href="#libs"/></svg><span data-w="31">Libraries</span></div>
      </div>
      <div class="w-[202px] h-[18px] mt-px flex items-center justify-between pl-[3px] pr-[4px] bg-linear-to-b from-[#cfcfcf] to-[#ececec] border border-[#bbb]"><svg class="w-[12px] h-[13px]"><use href="#doc"/></svg><span data-w="68">encodern8to3.vhd</span><svg class="w-[12px] h-[12px]"><use href="#xg"/></svg></div>
      <div class="w-[202px] h-[18px] mt-px flex items-center justify-between pl-[4px] pr-[4px] bg-linear-to-b from-[#cfcfcf] to-[#ececec] border border-[#bbb]"><svg class="w-[12px] h-[11px]"><use href="#sigma"/></svg><span data-w="113">Design Summary (Synthesized)</span><svg class="w-[12px] h-[12px]"><use href="#xg"/></svg></div>
      <div class="w-[203px] h-[18px] mt-px flex items-center justify-between pl-[5px] pr-[5px] bg-linear-to-b from-[#cfcfcf] to-[#ececec] border border-[#bbb]"><svg class="w-[12px] h-[12px]"><use href="#nodes"/></svg><span data-w="72">encodern8to3.ngr:1</span><svg class="w-[12px] h-[12px]"><use href="#xg"/></svg></div>
      <div class="w-[202px] h-[19px] flex items-center justify-between pl-[4px] pr-[5px] bg-[#f4f4f4] border-x border-[#bbb] border-b-2 border-b-[#1f6fb5]"><svg class="w-[13px] h-[13px]"><use href="#schDoc"/></svg><span data-w="77">encodern8to3 (RTL1)</span><svg class="w-[12px] h-[12px]"><use href="#xr"/></svg></div>
    </div>
    <div class="h-[5px] shrink-0 border-b border-[#bfbfbf] pl-[412px]"><div class="w-[411px] h-[3px] bg-[repeating-linear-gradient(90deg,#c4c4c4_0_1px,transparent_1px_4px)]"></div></div>

    <!-- View by Category -->
    <div class="h-[14px] shrink-0 flex items-center border-b border-l border-[#b9b9b9] pl-[2px] font-['DejaVu_Sans',sans-serif] text-[8px]">
      <span data-w="65">View by Category</span>
      <svg class="ml-auto w-[48px] h-[12px]"><use href="#dock"/></svg>
    </div>
    <div class="h-[15px] mb-px shrink-0 flex items-center font-['DejaVu_Sans',sans-serif] font-bold text-[8px] text-black">
      <div class="w-[618px] flex justify-center"><span data-w="138">Design Objects of Top Level Block</span></div>
      <div class="w-[624px] flex justify-center"><span data-w="151">Properties of Instance: encodern8to3</span></div>
    </div>
    <div class="h-[54px] shrink-0 flex pl-[3px]">
      <div class="w-[201px] mr-[5px] bg-white border border-[#8e8e8e]">
        <div class="h-[19px] flex items-center justify-between pl-[3px] pr-[8px]"><span data-w="40">Instances</span><svg class="w-[8px] h-[4px] mb-[5px]"><path d="M0 4l4-4 4 4z" fill="#999"/></svg></div>
        <div class="h-[13px] flex items-center pl-[8px]"><svg class="w-[10px] h-[12px]" fill="none" stroke="#b5b5b5" stroke-dasharray="1 1"><path d="M.5 0v6.500H9"/></svg><svg class="w-[12px] h-[12px] ml-px mr-px"><use href="#inst"/></svg><div class="w-[168px] h-[13px] bg-[#f1f1f1] flex items-center pl-[4px]"><span data-w="59">encodern8to3</span></div></div>
      </div>
      <div class="w-[200px] mr-[5px] bg-white border border-[#8e8e8e]">
        <div class="h-[19px] flex items-center justify-between pl-[3px] pr-[8px]"><span data-w="18">Pins</span><svg class="w-[8px] h-[4px] mb-[5px]"><path d="M0 4l4-4 4 4z" fill="#999"/></svg></div>
      </div>
      <div class="w-[201px] bg-white border border-[#8e8e8e]">
        <div class="h-[19px] flex items-center justify-between pl-[3px] pr-[8px]"><span data-w="30">Signals</span><svg class="w-[8px] h-[4px] mb-[5px]"><path d="M0 4l4-4 4 4z" fill="#999"/></svg></div>
      </div>
      <div class="w-[11px] flex items-center justify-center"><div class="w-[2px] h-[22px] mb-[16px] bg-[repeating-linear-gradient(180deg,#bbb_0_1px,transparent_1px_3px)]"></div></div>
      <div class="w-[611px] flex bg-white border border-[#8e8e8e] overflow-hidden">
        <div class="w-[595px] shrink-0">
          <div class="h-[19px] flex items-center pl-[3px]"><span data-w="26">Name</span><svg class="w-[8px] h-[4px] ml-[252px] mr-[7px] mb-[5px]"><path d="M0 0l4 4 4-4z" fill="#999"/></svg><div class="h-[16px] border-l border-[#eee] flex items-center pl-[3px]"><span data-w="24">Value</span></div></div>
          <div class="h-[13px] flex items-center pl-[2px]"><div class="w-[298px]"><span data-w="20">Type</span></div><span data-w="58">encodern8to3</span></div>
          <div class="h-[13px] flex items-center pl-[2px] bg-[#ebebeb]"><div class="w-[298px]"><span data-w="17">Part</span></div><span data-w="84">xc7a100t-2L-csg324</span></div>
          <div class="h-[13px] flex items-center pl-[2px]"><div class="w-[298px]"><span data-w="63">Instance Name</span></div><span data-w="58">encodern8to3</span></div>
        </div>
        <div class="w-[14px] h-[52px] bg-[#f0f0f0] flex flex-col items-center justify-between py-[3px]">
          <svg class="w-[8px] h-[6px] shrink-0" fill="none" stroke="#444" stroke-width="1.300"><path d="M1 5l3-3 3 3"/></svg>
          <div class="w-[13px] h-[16px] bg-[#cdcdcd] mb-[11px]"></div>
          <svg class="w-[8px] h-[6px] shrink-0" fill="none" stroke="#444" stroke-width="1.300"><path d="M1 1l3 3 3-3"/></svg>
        </div>
      </div>
    </div>
    <div class="h-[3px] shrink-0 border-b border-[#bcbcbc]"></div>

    <!-- Bottom tabs -->
    <div class="h-[19px] shrink-0 flex items-stretch font-['DejaVu_Sans',sans-serif] text-[8px]">
      <div class="w-[63px] flex items-center pl-[5px] border-r border-[#dadada]"><svg class="w-[12px] h-[12px] mr-[10px]"><use href="#doc"/></svg><span data-w="29">Console</span></div>
      <div class="w-[57px] flex items-center pl-[5px] border-r border-[#dadada]"><svg class="w-[13px] h-[13px] mr-[9px]"><use href="#err"/></svg><span data-w="23">Errors</span></div>
      <div class="w-[69px] flex items-center pl-[4px] border-r border-[#dadada]"><svg class="w-[13px] h-[13px] mr-[9px]"><use href="#warn"/></svg><span data-w="35">Warnings</span></div>
      <div class="w-[102px] flex items-center pl-[5px]"><svg class="w-[12px] h-[12px] mr-[9px]"><use href="#find"/></svg><span data-w="69">Find in Files Results</span></div>
      <div class="w-[100px] flex items-center pl-[6px] bg-white border-r border-[#d5d5d5]"><svg class="w-[12px] h-[12px] mr-[9px]"><use href="#grid"/></svg><span data-w="65">View by Category</span></div>
    </div>
    <div class="h-[17px] shrink-0 flex items-center justify-end pr-[3px]"><span data-w="37">[252,188]</span></div>

    <!-- Taskbar -->
    <div class="h-[32px] shrink-0 flex items-stretch bg-linear-to-r from-[#d2eaf0] via-[#d6e8ee] to-[#d5dfec]">
      <div class="w-[39px] flex items-center justify-center"><svg class="w-[13px] h-[13px]" viewBox="0 0 13 13"><path d="M0 1.800l5.800-.8v5.200H0zM6.600.9L13 0v6.200H6.600zM0 7h5.800v5.200L0 11.400zM6.600 7H13v6l-6.400-.9z" fill="#111"/></svg></div>
      <div class="w-[232px] bg-white flex items-center pl-[10px] text-[#444]">
        <svg class="w-[13px] h-[14px] mr-[9px]" fill="none" stroke="#333" stroke-width="1.200"><circle cx="8" cy="5.500" r="4.200"/><path d="M5 9l-4.500 4.500"/></svg>
        <span class="text-[12px]" data-w="106">Type here to search</span>
        <svg class="ml-auto w-[64px] h-[32px]" viewBox="0 0 64 32">
          <path d="M0 32Q8 16 30 18l34-2v16z" fill="#79aee0"/>
          <ellipse cx="18" cy="29" rx="15" ry="4" fill="#5fa845"/><ellipse cx="50" cy="28" rx="14" ry="4.500" fill="#4f9a3e"/><path d="M49 14v14" stroke="#3e8a3a" stroke-width="1.500"/>
          <ellipse cx="55" cy="20.500" rx="7" ry="1.800" fill="#58a548"/>
          <path d="M22 25Q8 24 10 14q5 1 7 5-2-7 1-10 3 2 4 5 1-5 5-7 3 4 1 8 3-4 7-3-1 6-5 8 4 0 6 1-3 5-14 4z" fill="#ec9cc8"/>
          <path d="M22 25q-7-2-7-8 4 1 6 4 1-5 3-6 2 3 2 6 3-3 5-3-1 6-9 7z" fill="#d976b3"/><circle cx="22" cy="20" r="3" fill="#f4d264"/>
          <path d="M49 18q-8-2-7-10l4 3q0-5 4-7 2 3 3 6l4-4q2 9-8 12z" fill="#c77acb"/><path d="M49 18q-4-5 1-13 4 7-1 13z" fill="#b25fb9"/>
        </svg>
      </div>
      <div class="w-[42px] pr-[3px] flex items-center justify-center"><svg class="w-[15px] h-[14px]" fill="none" stroke="#3c4a50" stroke-width="1.100"><path d="M1 4h8v6H1zM1 0v2h8V0M1 14v-2h8v2M12.500 0v4M12.500 7v7"/><path d="M11 5h3v1.500h-3z" fill="#3c4a50" stroke="none"/></svg></div>

      <div class="w-[35.2px] flex items-center justify-center"><svg class="w-[20px] h-[18px]" viewBox="0 0 20 18"><path d="M6 1l12 3v9L6 9z" fill="#4db4ee" stroke="#2277b0" stroke-width=".8"/><path d="M4 11l10 2.500-4 3L1 14z" fill="#dfe5ea" stroke="#9ba5ad" stroke-width=".8"/></svg></div>
      <div class="w-[35.2px] flex items-center justify-center"><svg class="w-[19px] h-[17px]" viewBox="0 0 19 17"><path d="M1 1h7l2 2h8v13H1z" fill="#e8ad33"/><path d="M1 5h17v11H1z" fill="#fbd768"/><path d="M4 16V9h11v7h-3v-4H7v4z" fill="#4792c4"/></svg></div>
      <div class="w-[35.2px] flex items-center justify-center"><svg class="w-[19px] h-[19px]" viewBox="0 0 20 20"><circle cx="10" cy="10" r="9.700" fill="url(#gEdge)"/><path d="M1 8Q3 0 11 .4q8 1 8.700 8.600-1 5-6 4-2-1-1-3-1-4-6-4-4 0-5.700 2z" fill="#35c79a"/><path d="M1 8q4-4 9-1-4 2-3 6 2 5 8 5-6 3-11-1Q0 13 1 8z" fill="#1377c8"/><path d="M12 10q-2 4 5 4 1.500-.5 2-1-2 4-6 3.500-5-1.500-4-6z" fill="#eef8fb"/></svg></div>
      <div class="w-[35.2px] flex items-center justify-center"><svg class="w-[20px] h-[18px]" viewBox="0 0 20 18"><path d="M0 6l10-6 10 6v12H0z" fill="#0f5ba6"/><path d="M2 5h16v8H2z" fill="#fff"/><path d="M0 6l10 7 10-7v12H0z" fill="#2fa5e4"/><path d="M0 18l10-7 10 7z" fill="#3cc1f3"/></svg></div>
      <div class="w-[35.2px] flex items-center justify-center"><svg class="w-[19px] h-[19px]" viewBox="0 0 19 19"><path d="M5.500 5V1h8v4" fill="none" stroke="#38a4dd" stroke-width="1.500"/><rect y="4" width="19" height="15" rx="2" fill="#1b4267"/><path d="M6 8h3v3H6z" fill="#e8552f"/><path d="M10 8h3v3h-3z" fill="#7ab83f"/><path d="M6 12h3v3H6z" fill="#35a6e3"/><path d="M10 12h3v3h-3z" fill="#f6bf2f"/></svg></div>
      <div class="w-[35.2px] flex items-center justify-center"><div class="w-[19px] h-[19px] bg-[#2ca5b8] flex items-center justify-center text-white font-bold text-[16px]">L</div></div>
      <div class="w-[35.2px] flex items-center justify-center"><svg class="w-[19px] h-[19px] bg-[#0a80cf]" viewBox="0 0 19 19"><path d="M8 13.500H6.800V12Q4.500 10.500 5 8.500 6 5.500 9.500 5.500t4.500 3q.5 2-1.800 3.500v1.500H11" fill="none" stroke="#3fd4f4" stroke-width="1.300"/></svg></div>
      <div class="w-[35.2px] flex flex-col items-center justify-end"><svg class="w-[19px] h-[19px] mb-[5px]" viewBox="0 0 20 20"><circle cx="10" cy="10" r="10" fill="#fbc02d"/><path d="M1.300 5a10 10 0 0 1 17.400 0L19 6H10L6 12.500z" fill="#db3b2e"/><path d="M1.300 5a10 10 0 0 0 7.700 15l4.500-7.500L10 14l-4-2z" fill="#279b4b"/><circle cx="10" cy="10" r="4.600" fill="#fff"/><circle cx="10" cy="10" r="3.600" fill="#3b78e0"/></svg><div class="w-[28px] h-[2px] bg-[#1c6fb8]"></div></div>
      <div class="w-[35.2px] flex items-center justify-center"><svg class="w-[19px] h-[19px]" viewBox="0 0 19 19"><circle cx="9.500" cy="9.500" r="8" fill="#f5e6e8" stroke="#bb3f4a" stroke-width="2.400"/><circle cx="9.500" cy="9.500" r="4" fill="#b5323f"/></svg></div>
      <div class="w-[35.2px] flex items-center justify-center"><svg class="w-[20px] h-[19px]" viewBox="0 0 20 19"><path d="M1 13Q1 5 9 4q8-1 8 4-1 3-5 3-2 2 0 4-2 3-7 3-4-1-4-5z" fill="#e6ecef" stroke="#9aa7ae" stroke-width=".8"/><circle cx="5" cy="10" r="1.400" fill="#de4e3c"/><circle cx="8" cy="7" r="1.400" fill="#53a93f"/><circle cx="12" cy="7" r="1.400" fill="#3c82d0"/><circle cx="5" cy="14" r="1.400" fill="#e7b435"/><path d="M18 1l-6 16" stroke="#b9915a" stroke-width="2.200"/></svg></div>
      <div class="w-[35.2px] flex items-center justify-center"><svg class="w-[18px] h-[17px]" viewBox="0 0 18 17"><circle cx="9.500" cy="8.500" r="8" fill="#bcd3e6"/><path d="M2 4Q8-2 15 3l2 5-16-1z" fill="#5aa2d6"/><path d="M9 1q5 0 7 4l-6 1z" fill="#f3f8fb"/><path d="M0 6q9-2 17 3l-1 4Q6 15 1 10z" fill="#222a35"/><path d="M3 8q6 0 11 3" stroke="#6f8ba5" stroke-width="1.200" fill="none"/></svg></div>
      <div class="w-[35.2px] flex flex-col items-center justify-end"><svg class="w-[19px] h-[19px] mb-[5px]" viewBox="0 0 19 19"><circle cx="9" cy="9" r="8.500" fill="#1c1b1e"/><path d="M9 9Q8 3 12 2M9 9q6 1 6 6M9 9q-5 4-7 0" stroke="#cfcfcf" stroke-width="1.500" fill="none"/><circle cx="13.500" cy="13.500" r="5" fill="#ee1212"/></svg><div class="w-[27px] h-[2px] bg-[#1c6fb8]"></div></div>
      <div class="w-[35.2px] flex flex-col items-center justify-end"><div class="w-[19px] h-[18px] mb-[5px] rounded-[2px] bg-linear-to-b from-[#3c95e0] to-[#174a9f] flex items-center"><div class="w-[11px] h-[11px] bg-[#1b54a8] text-white text-[8px] font-bold flex items-center justify-center">W</div></div><div class="w-[27px] h-[2px] bg-[#1c6fb8]"></div></div>
      <div class="w-[35.2px] flex flex-col items-center justify-end"><div class="w-[19px] h-[18px] mb-[5px] rounded-full bg-linear-to-b from-[#ec7a5b] to-[#cc4426] flex items-center"><div class="w-[10px] h-[11px] bg-[#b8351d] text-white text-[8px] font-bold flex items-center justify-center">P</div></div><div class="w-[27px] h-[2px] bg-[#1c6fb8]"></div></div>
      <div class="w-[34.500px] bg-[#eaf4f7] flex flex-col items-center justify-end"><svg class="w-[19px] h-[18px] mb-[5px]"><use href="#ise"/></svg><div class="w-full h-[2px] bg-[#1c6fb8]"></div></div>

      <div class="ml-[20px] w-[27px] flex items-center"><svg class="w-[20px] h-[18px]" viewBox="0 0 20 18"><path d="M12 1q7 2 6 9-2 7-9 7-4-1-5-3 9 1 8-13z" fill="#f3a52f"/><path d="M1 8q0-3 3-3 2-4 5 0 3 0 2 3z" fill="#e7f1fb" stroke="#7ba3d5"/><path d="M10 17q-1-3 2-3 2-3 4 0 3 0 3 3z" fill="#dbe7f3" stroke="#a9bed6" stroke-width=".8"/></svg></div>
      <div class="w-[43px] flex items-center text-[11px]"><span data-w="25">36°C</span></div>
      <svg class="w-[177px] h-[32px]" viewBox="931 665 177 32" fill="none" stroke="#2c2c2c" stroke-width="1.200">
        <path d="M932.500 684l5-5 5 5"/>
        <path d="M957 675l5.500 1.500v5q-1 4-5.500 5.500-4.500-1.500-5.500-5.500v-5z" fill="#2584cc" stroke="#8fb9da"/><path d="M954.500 681l2 2 3.500-4" stroke="#fff" stroke-width="1.600"/>
        <path d="M973.500 678h6v8h-6zM979.500 680h2v4h-2M974 675.500h5M975 687.500h5"/>
        <path d="M990 685q-1-4 3-4 3-5 7-1 3 0 2 5z" fill="#b8b8b8" stroke="#555"/>
        <path d="M1012 675h5v9h-5z" fill="#111" stroke="none"/><path d="M1010 686.500h9" stroke="#111"/>
        <path d="M1030.500 686q0-8 9-9M1033 686q0-5.500 6.500-6.500M1036 686q0-3 3.500-3.500"/><circle cx="1039" cy="686" r="1" fill="#222" stroke="none"/>
        <path d="M1047.500 679h2l3-3v10l-3-3h-2zM1055 679q1.500 2 0 4M1057 677.500q2.500 3.500 0 7M1059.500 676q3 5 0 10"/>
        <path d="M1070 679h9v6h-9z" fill="#111"/><path d="M1080 681v2M1067 678h3M1068 676v3M1068 680v4" stroke-width="1.500"/>
        <path d="M1101 676l-7 7-1 3 3-1 7-6zM1094 682q-4-2-4 2t4 3 4-2"/>
      </svg>
      <div class="w-[31px] flex flex-col items-center text-[9.5px] pt-[4px] gap-[4px]"><span data-w="18">ENG</span><span data-w="9">IN</span></div>
      <div class="ml-[2px] w-[56px] flex flex-col items-center text-[9.5px] pt-[4px] gap-[5px]"><span data-w="22">23:39</span><span data-w="49">15-05-2023</span></div>
      <svg class="ml-[8px] w-[26px] h-[32px] font-['Open_Sans',sans-serif]" viewBox="0 0 26 32"><path d="M2 10h13v10H8l-3 3v-3H2z" fill="#111"/><path d="M4 13h9M4 15.500h9" stroke="#d5dfec"/><circle cx="14" cy="22" r="5.500" fill="#dfe4e8" stroke="#777" stroke-width=".8"/><text x="11.500" y="25.200" font-size="9" fill="#222">2</text></svg>
      <div class="ml-auto w-[3px] border-l border-[#a9b4bf]"></div>
    </div>
  </div>

  <script>
    // Spread each label's letters so that it takes the width given in data-w
    function fitLabels() {
      document.querySelectorAll("[data-w]").forEach(label => {
        label.style.letterSpacing = "0px";
        const range = document.createRange();
        range.selectNodeContents(label);
        const actual = range.getBoundingClientRect().width;
        const gap = (Number(label.dataset.w) - actual) / label.textContent.length;
        label.style.letterSpacing = gap.toFixed(3) + "px";
      });
    }

    window.addEventListener("load", fitLabels);
    // the stylesheet can arrive late, so fit again when the page changes size
    new ResizeObserver(fitLabels).observe(document.body);
  </script>
</body>
</html>
